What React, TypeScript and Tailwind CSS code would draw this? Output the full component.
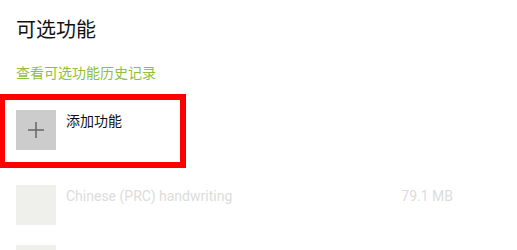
const font = { fontFamily: '"Noto Sans", "Noto Sans CJK SC", sans-serif' }

function FeatureRow({ name, size }: { name: string; size?: string }) {
  return (
    <div className="flex h-[60px] items-start">
      <div className="h-10 w-10 shrink-0 bg-[#efefec]" />
      <div className="ml-[10px] flex w-[387px] justify-between pt-[2px] font-['Roboto',sans-serif] text-[14px] leading-[18px] text-[#dcdcdc]">
        <span>{name}</span>
        {size && <span>{size}</span>}
      </div>
    </div>
  )
}

export default function App() {
  return (
    <div
      className="relative h-[250px] w-[517px] overflow-hidden bg-white pl-4 pt-[17px]"
      style={font}
    >
      <h1 className="text-[20px] leading-[26px] font-normal text-[#111]">可选功能</h1>
      <a className="mt-[21px] block text-[14px] leading-[18px] text-[#8fc03a]">
        查看可选功能历史记录
      </a>

      {/* add feature */}
      <div className="mt-[28px] flex h-[75px] items-start">
        <div className="flex h-10 w-10 shrink-0 items-center justify-center bg-[#cccccc]">
          <svg width="18" height="18" viewBox="0 0 18 18">
            <path d="M9 1v16M1 9h16" stroke="#666" strokeWidth="1.5" />
          </svg>
        </div>
        <span className="ml-[10px] pt-[2px] text-[14px] leading-[18px] text-[#111]">
          添加功能
        </span>
      </div>

      <FeatureRow name="Chinese (PRC) handwriting" size="79.1 MB" />
      <FeatureRow name="" />

      {/* red highlight annotation */}
      <div className="pointer-events-none absolute left-[-1px] top-[94px] h-[74px] w-[187px] border-[6px] border-[#ff0000]" />
    </div>
  )
}
